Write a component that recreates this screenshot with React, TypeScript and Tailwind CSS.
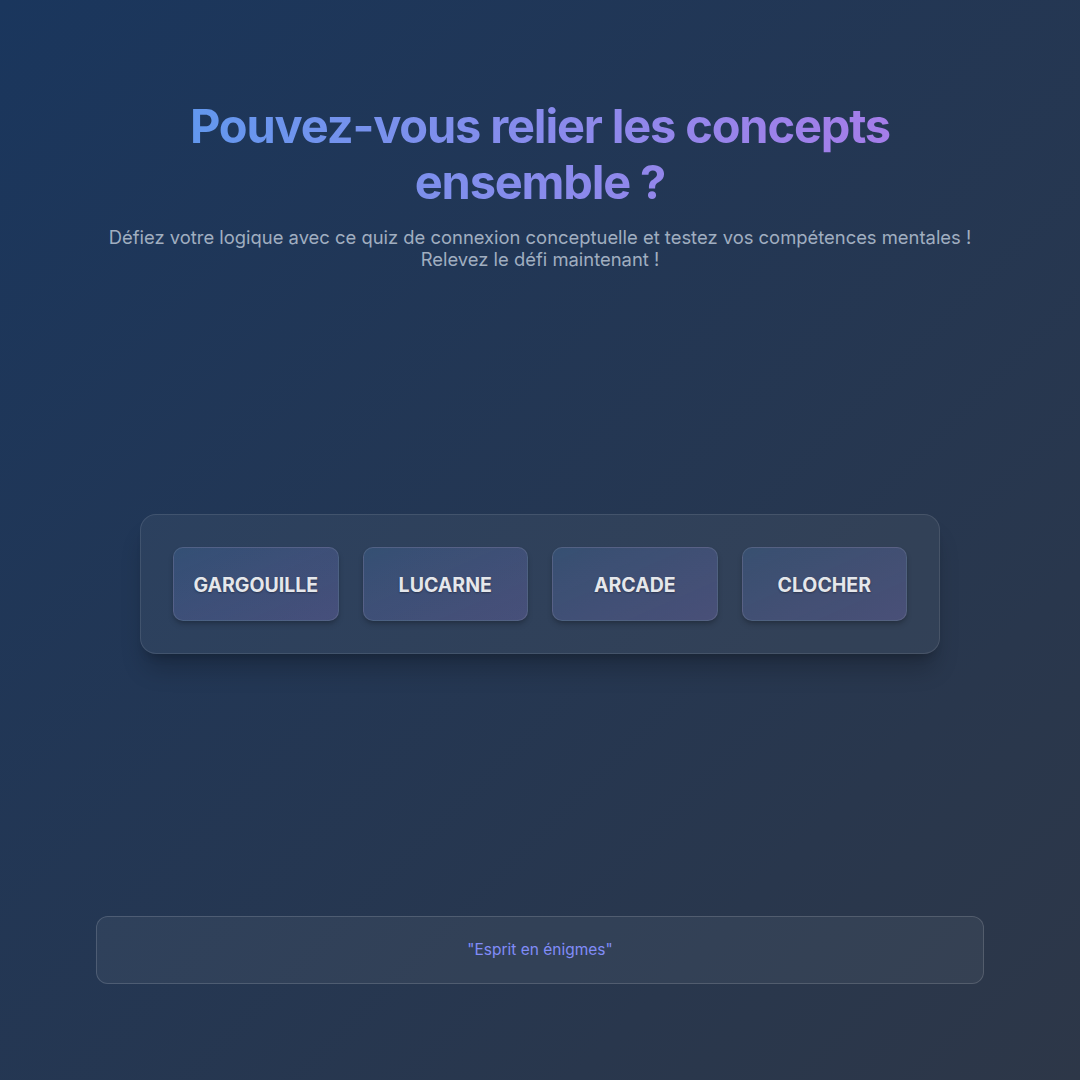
const words = ['GARGOUILLE', 'LUCARNE', 'ARCADE', 'CLOCHER'];

export default function App() {
  return (
    <div className="min-h-screen w-full bg-gradient-to-br from-[#1a365d] to-[#2d3748] font-['Inter','Liberation_Sans',sans-serif] flex flex-col px-24 py-24">
      {/* en-tête */}
      <header className="flex flex-col items-center text-center pt-[2px]">
        <h1 className="max-w-[740px] text-[47px] leading-[56px] font-bold tracking-tight bg-gradient-to-r from-[#5f98ee] to-[#a67ce9] bg-clip-text text-transparent">
          Pouvez-vous relier les concepts ensemble ?
        </h1>
        <p className="mt-[16px] text-[18.4px] leading-[22px] text-[#a0aec0]">
          Défiez votre logique avec ce quiz de connexion conceptuelle et testez vos compétences mentales !
          <br />
          Relevez le défi maintenant !
        </p>
      </header>

      {/* grille des mots */}
      <main className="flex-1 flex items-center justify-center pb-[18px]">
        <div className="w-[800px] rounded-2xl border border-white/10 bg-white/5 shadow-xl shadow-black/20 p-8 flex gap-6">
          {words.map((w) => (
            <button
              key={w}
              className="flex-1 h-[74px] pt-[3px] rounded-[10px] border border-white/10 bg-gradient-to-br from-[#60a5fa]/15 to-[#a78bfa]/20 shadow-md shadow-black/20 text-[19.5px] font-bold text-[#e5e7eb] [text-shadow:0_1px_2px_rgba(0,0,0,0.35)]"
            >
              {w}
            </button>
          ))}
        </div>
      </main>

      {/* pied de page */}
      <footer className="h-[68px] rounded-xl border border-white/15 bg-white/5 flex items-center justify-center">
        <span className="text-[15.5px] text-[#818cf8]">"Esprit en énigmes"</span>
      </footer>
    </div>
  );
}
